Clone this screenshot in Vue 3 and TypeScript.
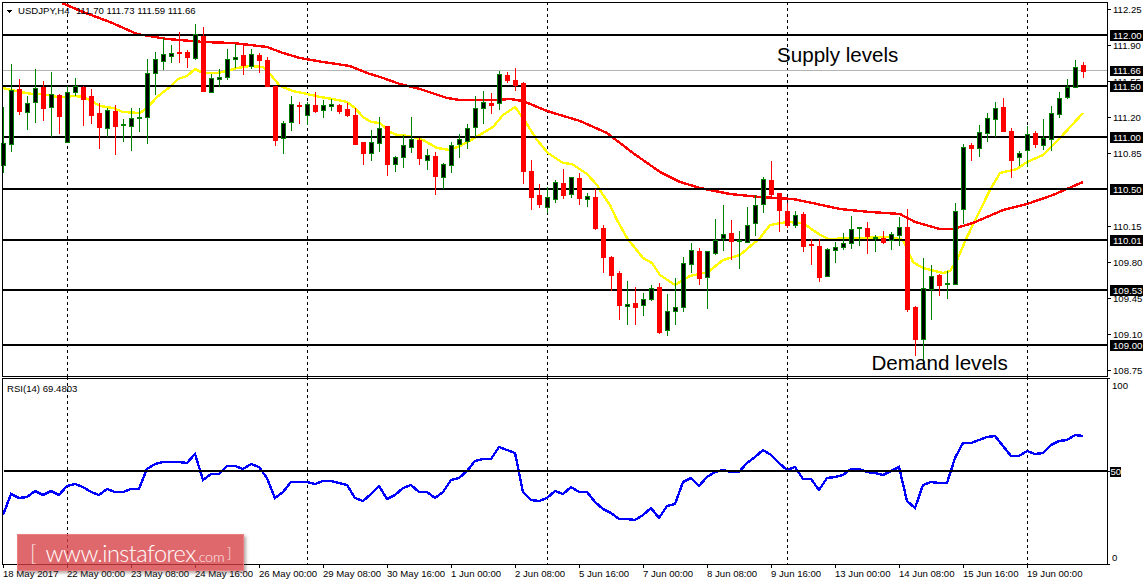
<template>
  <div class="terminal">
    <!-- Price pane -->
    <svg class="pane" width="1147" height="377" viewBox="0 0 1147 377">
      <line v-for="x in gridX" :key="x" class="grid" :x1="x + 0.5" y1="2" :x2="x + 0.5" y2="377" />
      <rect x="3" y="70" width="1105" height="1" fill="#b4b4b4" />
      <polyline class="ma" stroke="#ffff00" :points="toPoints(yellowMa)" />
      <polyline class="ma" stroke="#ff0000" :points="toPoints(redMa)" />
      <rect v-for="l in levels" :key="l.label" x="3" :y="l.y - 1" width="1105" height="2" fill="#000" />

      <g v-for="c in candles" :key="c.x">
        <rect :x="c.x" :y="c.high" width="1" :height="c.low - c.high" :fill="c.bull ? '#008000' : '#ff0000'" />
        <rect
          :x="c.x - 1.5"
          :y="c.top + 0.5"
          width="4"
          :height="Math.max(c.bottom - c.top, 1)"
          :fill="c.bull ? '#000' : '#ff0000'"
          :stroke="c.bull ? '#008000' : '#ff0000'"
        />
      </g>

      <!-- frame -->
      <path class="frame" d="M2.5 377V2.5H1107.5V377M2 376.5H1108" />

      <path d="M6 9.5h7l-3.5 3.5z" fill="#000" />
      <text class="small" x="18" y="14">USDJPY,H4</text>
      <text class="small" x="76" y="14">111.70 111.73 111.59 111.66</text>
      <text class="note" x="777" y="62">Supply levels</text>
      <text class="note" x="871.5" y="370">Demand levels</text>

      <!-- price axis -->
      <g v-for="t in priceTicks" :key="t.label">
        <rect x="1108" :y="t.y" width="3" height="1" fill="#000" />
        <text class="small" x="1113" :y="t.y + 4">{{ t.label }}</text>
      </g>
      <rect x="1110" y="66" width="33" height="10" fill="#000" />
      <text class="small light" x="1113" y="74">111.66</text>
      <g v-for="l in levels" :key="l.label">
        <rect x="1110" :y="l.y - 5" width="33" height="11" fill="#000" />
        <text class="small light" x="1113" :y="l.y + 4">{{ l.label }}</text>
      </g>
    </svg>

    <!-- RSI pane -->
    <svg class="pane" width="1147" height="188" viewBox="0 377 1147 188">
      <line v-for="x in gridX" :key="x" class="grid" :x1="x + 0.5" y1="377" :x2="x + 0.5" y2="565" />
      <polyline class="ma" stroke="#0000ff" :points="rsiPoints" />
      <rect x="4" y="470" width="1104" height="2" fill="#000" />
      <path class="frame" d="M2.5 564.5V378.5H1107.5V564.5M2 564.5H1110M1108 378.5H1110" />
      <rect x="1108" y="471" width="3" height="1" fill="#000" />
      <text class="small" x="7" y="392">RSI(14) 69.4803</text>
      <text class="small" x="1112" y="389">100</text>
      <text class="small" x="1112" y="561">0</text>
      <rect x="1110" y="467" width="11" height="10" fill="#000" />
      <text class="small light" x="1110.5" y="475">50</text>
    </svg>

    <!-- Time axis -->
    <div class="time-axis">
      <span v-for="label in timeLabels" :key="label" class="time-cell">{{ label }}</span>
    </div>

    <!-- Broker watermark -->
    <div class="watermark">
      <span class="bracket">[</span>
      <span class="site">www.instaforex<small>.com</small></span>
      <span class="bracket closing">]</span>
    </div>
  </div>
</template>

<script setup lang="ts">
type Point = [number, number];
// bull, high, body top, body bottom, low (screen y)
type Bar = [number, number, number, number, number];

const gridX = [67, 307, 547, 787, 1027];

const levels = [
  { y: 35, label: '112.00' },
  { y: 86, label: '111.50' },
  { y: 137, label: '111.00' },
  { y: 189, label: '110.50' },
  { y: 240, label: '110.01' },
  { y: 290, label: '109.53' },
  { y: 345, label: '109.00' },
];

const priceTicks = [
  { y: 9, label: '112.25' },
  { y: 45, label: '111.90' },
  { y: 81, label: '111.55' },
  { y: 117, label: '111.20' },
  { y: 153, label: '110.85' },
  { y: 226, label: '110.15' },
  { y: 262, label: '109.80' },
  { y: 298, label: '109.45' },
  { y: 334, label: '109.10' },
  { y: 370, label: '108.75' },
];

const timeLabels = [
  '18 May 2017', '22 May 00:00', '23 May 08:00', '24 May 16:00', '26 May 00:00', '29 May 08:00',
  '30 May 16:00', '1 Jun 00:00', '2 Jun 08:00', '5 Jun 16:00', '7 Jun 00:00', '8 Jun 08:00',
  '9 Jun 16:00', '13 Jun 00:00', '14 Jun 08:00', '15 Jun 16:00', '19 Jun 00:00',
];

const bars: Bar[] = [
  [1,107,143,165,173],[1,64,90,144,152],[0,79,89,111,115],[1,96,103,112,130],[1,69,88,102,123],
  [0,81,87,108,121],[1,72,94,107,137],[0,94,95,116,134],[1,86,92,142,143],[1,78,86,92,96],
  [0,86,87,99,126],[0,89,96,115,124],[0,103,113,127,149],[1,108,110,128,137],[0,105,111,126,155],
  [1,119,124,125,142],[1,108,118,126,151],[1,108,117,117,132],[1,59,73,117,144],[1,52,59,73,95],
  [1,38,54,61,70],[1,45,53,56,63],[0,32,52,53,63],[0,50,52,57,68],[1,24,34,58,60],
  [0,27,36,91,92],[1,74,78,92,92],[1,69,77,79,87],[1,49,59,77,80],[1,44,57,59,68],
  [0,43,55,65,75],[1,49,54,66,69],[0,53,55,60,73],[0,57,60,86,86],[0,86,86,140,146],
  [1,121,123,138,154],[1,96,104,122,131],[0,102,105,106,124],[1,102,104,115,125],[0,92,105,111,113],
  [1,100,105,110,118],[1,99,104,106,111],[0,104,105,111,114],[0,103,109,115,117],[0,108,115,144,144],
  [0,142,142,153,165],[1,130,142,153,161],[1,117,128,143,152],[0,126,126,164,176],[1,156,157,164,172],
  [1,135,145,157,168],[1,117,139,147,153],[0,138,140,158,165],[1,149,155,160,170],[0,152,156,176,195],
  [1,163,164,177,189],[1,142,145,165,173],[1,134,139,144,158],[1,124,128,141,149],[1,96,108,127,137],
  [1,91,102,108,124],[0,93,103,105,114],[1,71,74,103,110],[0,72,75,80,83],[0,68,80,85,91],
  [0,82,83,171,184],[0,160,171,197,210],[0,184,195,204,208],[1,187,197,207,213],[1,180,182,199,203],
  [0,169,183,195,199],[1,177,177,194,198],[0,173,178,198,205],[1,193,196,199,207],[0,189,197,228,230],
  [0,225,228,257,273],[0,256,257,275,291],[0,271,273,305,320],[1,281,304,306,325],[0,287,303,307,325],
  [1,293,299,305,316],[1,285,288,299,301],[0,283,287,332,334],[1,294,311,330,336],[1,278,307,311,325],
  [1,257,263,307,312],[1,243,250,264,273],[0,248,251,278,285],[1,251,251,277,309],[1,219,240,253,255],
  [1,205,234,238,251],[0,220,233,241,260],[1,231,240,241,269],[1,207,225,242,243],[1,195,205,223,236],
  [1,177,179,204,213],[0,161,180,194,199],[0,193,193,210,232],[0,203,211,225,228],[1,211,215,225,228],
  [0,212,214,246,252],[0,239,244,245,265],[0,239,246,277,282],[1,248,249,276,277],[1,242,247,250,263],
  [1,233,243,247,250],[1,216,229,243,249],[1,227,227,228,246],[0,222,228,236,254],[1,235,237,237,252],
  [0,231,238,242,244],[1,232,234,240,250],[1,217,227,235,246],[0,209,227,309,312],[0,306,307,339,356],
  [1,258,288,339,363],[1,265,276,289,320],[0,274,275,285,296],[1,271,283,284,299],[1,203,211,284,285],
  [1,144,147,209,224],[0,143,145,148,161],[1,125,132,148,157],[1,113,118,133,142],[1,102,108,119,137],
  [0,98,107,131,132],[0,128,131,160,178],[1,151,153,157,166],[1,126,134,150,167],[0,131,133,144,148],
  [1,119,138,145,150],[1,106,113,139,151],[1,92,98,114,118],[1,79,87,97,99],[1,60,67,87,88],
  [0,62,65,71,78],
];

const candles = bars.map(([bull, high, top, bottom, low], i) => ({
  x: 3 + i * 8,
  bull: bull === 1,
  high,
  top,
  bottom,
  low,
}));

const yellowMa: Point[] = [
  [3,88],[20,92],[33,94],[43,94],[57,97],[63,97],[75,96],[83,97],[90,100],[100,106],[113,108],[123,112],[140,113],
  [147,108],[157,97],[170,87],[178,79],[187,76],[195,69],[203,73],[217,73],[227,71],[237,68],[250,66],[263,67],
  [270,74],[280,86],[293,91],[307,94],[320,97],[333,99],[347,102],[355,108],[363,117],[371,122],[380,123],[390,132],
  [397,135],[410,136],[423,140],[437,148],[450,150],[460,146],[473,139],[493,127],[503,115],[515,107],[523,118],
  [537,140],[548,153],[563,163],[572,164],[587,174],[597,185],[603,195],[610,205],[617,220],[627,238],[643,258],
  [652,263],[660,275],[675,285],[690,276],[708,272],[723,260],[740,255],[760,238],[770,225],[787,222],[803,223],
  [817,233],[828,239],[857,238],[890,237],[903,240],[913,262],[923,268],[943,273],[950,271],[957,260],[967,237],
  [990,190],[1000,173],[1017,169],[1027,162],[1043,155],[1060,138],[1083,113],
];

const redMa: Point[] = [
  [62,3],[83,12],[110,22],[137,34],[167,39],[203,42],[233,43],[267,47],[283,53],[300,58],[323,62],[350,66],[367,73],
  [380,77],[400,84],[420,89],[447,98],[460,100],[497,100],[510,99],[523,101],[547,111],[580,121],[607,133],[633,153],
  [660,172],[680,182],[700,188],[730,194],[760,197],[793,199],[817,204],[840,209],[870,212],[900,214],[915,222],
  [940,229],[953,229],[973,223],[1003,210],[1027,204],[1053,195],[1083,182],
];

const rsi = [
  515,494,498,497,491,495,491,495,486,484,487,492,495,489,492,492,489,489,469,464,462,462,462,463,454,480,474,474,
  466,466,469,464,467,478,498,492,482,482,482,484,481,481,483,485,498,501,494,486,
  499,495,488,485,492,492,498,492,480,478,471,461,459,459,447,450,453,492,500,501,498,491,494,487,492,492,502,509,
  513,519,519,520,515,508,518,506,504,482,478,486,477,472,470,472,472,463,457,
  450,455,463,470,467,479,479,490,478,477,475,469,469,472,473,475,471,467,501,508,485,482,483,483,458,443,443,440,
  437,436,446,456,456,451,454,453,445,441,440,435,436,
];

const toPoints = (pts: Point[]) => pts.map(([x, y]) => `${x},${y}`).join(' ');
const rsiPoints = rsi.map((y, i) => `${3 + i * 8},${y}`).join(' ');
</script>

<style scoped>
.terminal {
  position: relative;
  width: 1147px;
  height: 585px;
  overflow: hidden;
  background: #fff;
  font-family: 'Liberation Sans', Arial, sans-serif;
}

.pane {
  display: block;
  shape-rendering: crispEdges;
}

.grid {
  stroke: #000;
  stroke-width: 1;
  stroke-dasharray: 3 3;
}

.ma {
  fill: none;
  stroke-width: 2.4;
}

.frame {
  fill: none;
  stroke: #000;
  stroke-width: 1;
}

.small {
  font-size: 9.6px;
  fill: #000;
}

.small.light {
  fill: #fff;
}

.note {
  font-size: 20.6px;
  fill: #000;
}

.time-axis {
  display: grid;
  grid-auto-flow: column;
  grid-auto-columns: 64px;
  height: 20px;
  padding-left: 3px;
  font-size: 9.6px;
  line-height: 12px;
  color: #000;
}

.time-cell {
  white-space: nowrap;
}

.time-cell::before {
  content: '';
  display: block;
  width: 1px;
  height: 3px;
  background: #000;
}

/* sits over the bottom left of the chart */
.watermark {
  position: absolute;
  left: 17px;
  top: 534px;
  width: 227px;
  height: 37px;
  box-sizing: border-box;
  display: flex;
  align-items: center;
  padding-left: 12px;
  background: rgba(214, 62, 66, 0.78);
  border: 1px solid rgba(236, 130, 130, 0.9);
  box-shadow: 2px 2px 3px rgba(90, 60, 60, 0.45);
  color: #fff;
  font-family: Lato, 'Liberation Sans', sans-serif;
}

.bracket {
  font-size: 22px;
  font-weight: 300;
  opacity: 0.85;
}

.closing {
  font-size: 14px;
  margin-left: 3px;
}

.site {
  margin-left: 9px;
  font-size: 23.5px;
  font-weight: 300;
  letter-spacing: -0.55px;
  white-space: nowrap;
}

.site small {
  font-size: 14.5px;
  letter-spacing: -0.3px;
  opacity: 0.85;
}
</style>
